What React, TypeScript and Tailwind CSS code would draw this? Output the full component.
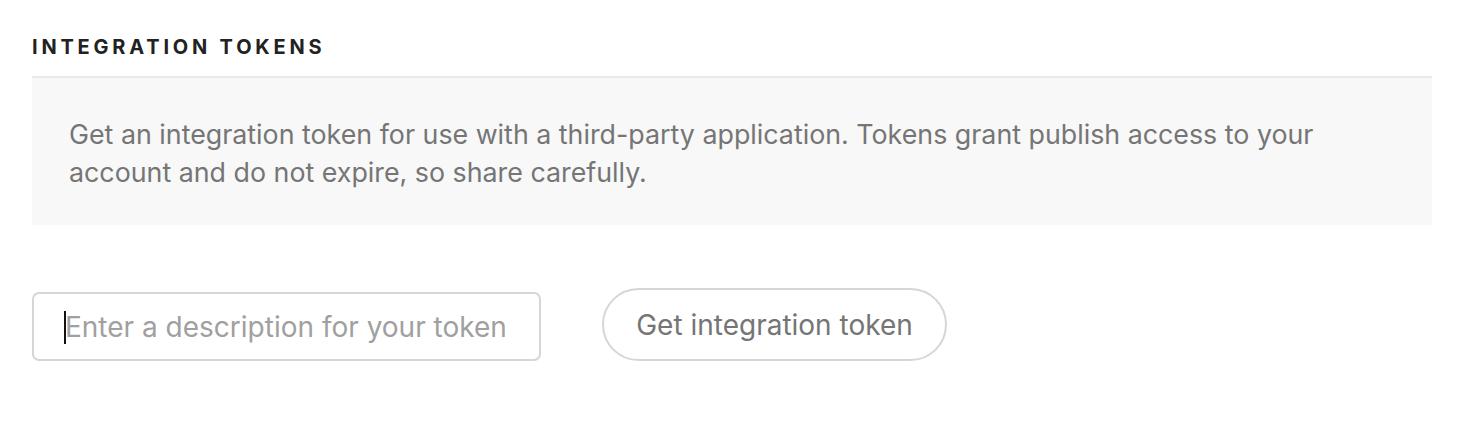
import { useState } from 'react';

export default function App() {
  const [description, setDescription] = useState('');

  return (
    <div className="w-[1460px] h-[446px] bg-white font-['Inter',sans-serif]">
      <section className="pl-8 pr-[28px] pt-[37px]">
        <h2 className="text-[20px] leading-[20px] font-bold tracking-[3.8px] text-[#222] pb-[19px] border-b-2 border-[#e9e9e9]">
          INTEGRATION TOKENS
        </h2>
        <div className="bg-[#f8f8f8] pl-[37px] pr-10 pt-[37px] pb-[34px]">
          <p className="text-[26.8px] leading-[38px] text-[#757575] max-w-[1290px]">
            Get an integration token for use with a third-party application. Tokens grant publish access to your
            account and do not expire, so share carefully.
          </p>
        </div>
        <div className="flex items-start gap-[61px] mt-[63px]">
          <div className="relative mt-[4px]">
            <input
              value={description}
              onChange={(e) => setDescription(e.target.value)}
              placeholder="Enter a description for your token"
              className="w-[509px] h-[69px] border-2 border-[#d6d6d6] rounded-[7px] pl-[31px] pr-4 text-[28px] text-[#555] placeholder:text-[#a0a0a0] outline-none caret-black"
            />
            {description === '' && (
              <span className="absolute left-[32px] top-[19px] w-[2px] h-[33px] bg-[#111] pointer-events-none" />
            )}
          </div>
          <button className="h-[73px] w-[345px] rounded-full border-2 border-[#d6d6d6] text-[28px] text-[#757575] bg-white">
            Get integration token
          </button>
        </div>
      </section>
    </div>
  );
}
